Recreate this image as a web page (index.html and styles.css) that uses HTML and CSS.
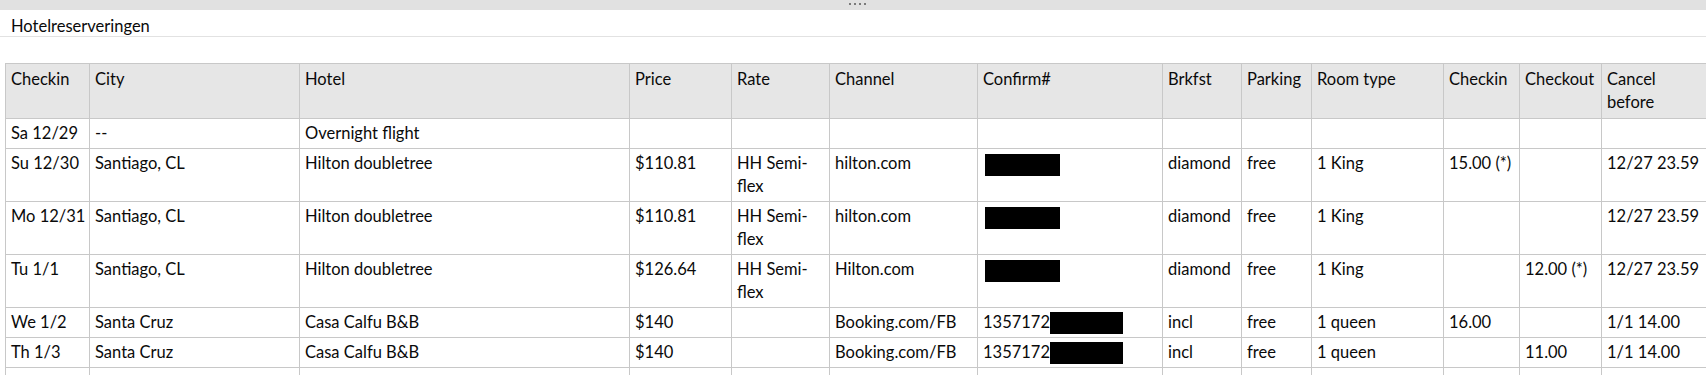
FILE: index.html
```html
<!DOCTYPE html>
<html>
<head>
<meta charset="utf-8">
<title>Hotelreserveringen</title>
<link rel="stylesheet" href="styles.css">
</head>
<body>
<div class="splitter"><span class="grip"><i></i><i></i><i></i><i></i></span></div>
<div class="title">Hotelreserveringen</div>
<table class="grid">
  <colgroup>
    <col class="c1"><col class="c2"><col class="c3"><col class="c4"><col class="c5"><col class="c6"><col class="c7"><col class="c8"><col class="c9"><col class="c10"><col class="c11"><col class="c12"><col class="c13">
  </colgroup>
  <thead>
    <tr><th>Checkin</th><th>City</th><th>Hotel</th><th>Price</th><th>Rate</th><th>Channel</th><th>Confirm#</th><th>Brkfst</th><th>Parking</th><th>Room type</th><th>Checkin</th><th>Checkout</th><th>Cancel<br>before</th></tr>
  </thead>
  <tbody>
    <tr><td>Sa 12/29</td><td>--</td><td>Overnight flight</td><td></td><td></td><td></td><td></td><td></td><td></td><td></td><td></td><td></td><td></td></tr>
    <tr><td>Su 12/30</td><td>Santiago, CL</td><td>Hilton doubletree</td><td>$110.81</td><td>HH Semi-<br>flex</td><td>hilton.com</td><td><span class="redact"></span></td><td>diamond</td><td>free</td><td>1 King</td><td>15.00 (*)</td><td></td><td>12/27 23.59</td></tr>
    <tr><td>Mo 12/31</td><td>Santiago, CL</td><td>Hilton doubletree</td><td>$110.81</td><td>HH Semi-<br>flex</td><td>hilton.com</td><td><span class="redact"></span></td><td>diamond</td><td>free</td><td>1 King</td><td></td><td></td><td>12/27 23.59</td></tr>
    <tr><td>Tu 1/1</td><td>Santiago, CL</td><td>Hilton doubletree</td><td>$126.64</td><td>HH Semi-<br>flex</td><td>Hilton.com</td><td><span class="redact"></span></td><td>diamond</td><td>free</td><td>1 King</td><td></td><td>12.00 (*)</td><td>12/27 23.59</td></tr>
    <tr><td>We 1/2</td><td>Santa Cruz</td><td>Casa Calfu B&amp;B</td><td>$140</td><td></td><td>Booking.com/FB</td><td>1357172<span class="redact short"></span></td><td>incl</td><td>free</td><td>1 queen</td><td>16.00</td><td></td><td>1/1 14.00</td></tr>
    <tr><td>Th 1/3</td><td>Santa Cruz</td><td>Casa Calfu B&amp;B</td><td>$140</td><td></td><td>Booking.com/FB</td><td>1357172<span class="redact short"></span></td><td>incl</td><td>free</td><td>1 queen</td><td></td><td>11.00</td><td>1/1 14.00</td></tr>
    <tr><td>&nbsp;</td><td></td><td></td><td></td><td></td><td></td><td></td><td></td><td></td><td></td><td></td><td></td><td></td></tr>
  </tbody>
</table>
</body>
</html>
```
FILE: styles.css
```css
html, body {
  margin: 0;
  padding: 0;
  background: #ffffff;
  overflow: hidden;
}
body {
  font-family: Lato, "Noto Sans", sans-serif;
  font-size: 16.5px;
  color: #0a0a0a;
  width: 1706px;
  height: 375px;
}
.splitter {
  height: 10px;
  background: #e1e1e1;
  display: flex;
  justify-content: center;
}
.grip {
  display: flex;
  gap: 3px;
  padding-top: 3px;
  margin-left: 8px;
}
.grip i {
  display: block;
  width: 2px;
  height: 2px;
  background: #7a7a7a;
}
.title {
  box-sizing: border-box;
  height: 27px;
  padding: 6px 0 0 11px;
  line-height: 20px;
  border-bottom: 1px solid #e2e2e2;
}
.grid {
  margin: 26px 0 0 5px;
  border-collapse: collapse;
  table-layout: fixed;
  width: 1710px;
}
.grid th, .grid td {
  border: 1px solid #c8c8c8;
  padding: 3px 5px;
  line-height: 23px;
  text-align: left;
  vertical-align: top;
  font-weight: normal;
  overflow: hidden;
  white-space: nowrap;
}
.grid th {
  background: #e6e6e6;
  height: 47px;
  padding-top: 4px;
}
.c1 { width: 84px; }
.c2 { width: 210px; }
.c3 { width: 330px; }
.c4 { width: 102px; }
.c5 { width: 98px; }
.c6 { width: 148px; }
.c7 { width: 185px; }
.c8 { width: 79px; }
.c9 { width: 70px; }
.c10 { width: 132px; }
.c11 { width: 76px; }
.c12 { width: 82px; }
.c13 { width: 114px; }
.redact {
  display: inline-block;
  width: 75px;
  height: 22px;
  background: #000000;
  vertical-align: top;
  margin-left: 2px;
  margin-top: 2px;
}
.redact.short {
  width: 73px;
  margin-left: 0;
  margin-top: 1px;
}
```
